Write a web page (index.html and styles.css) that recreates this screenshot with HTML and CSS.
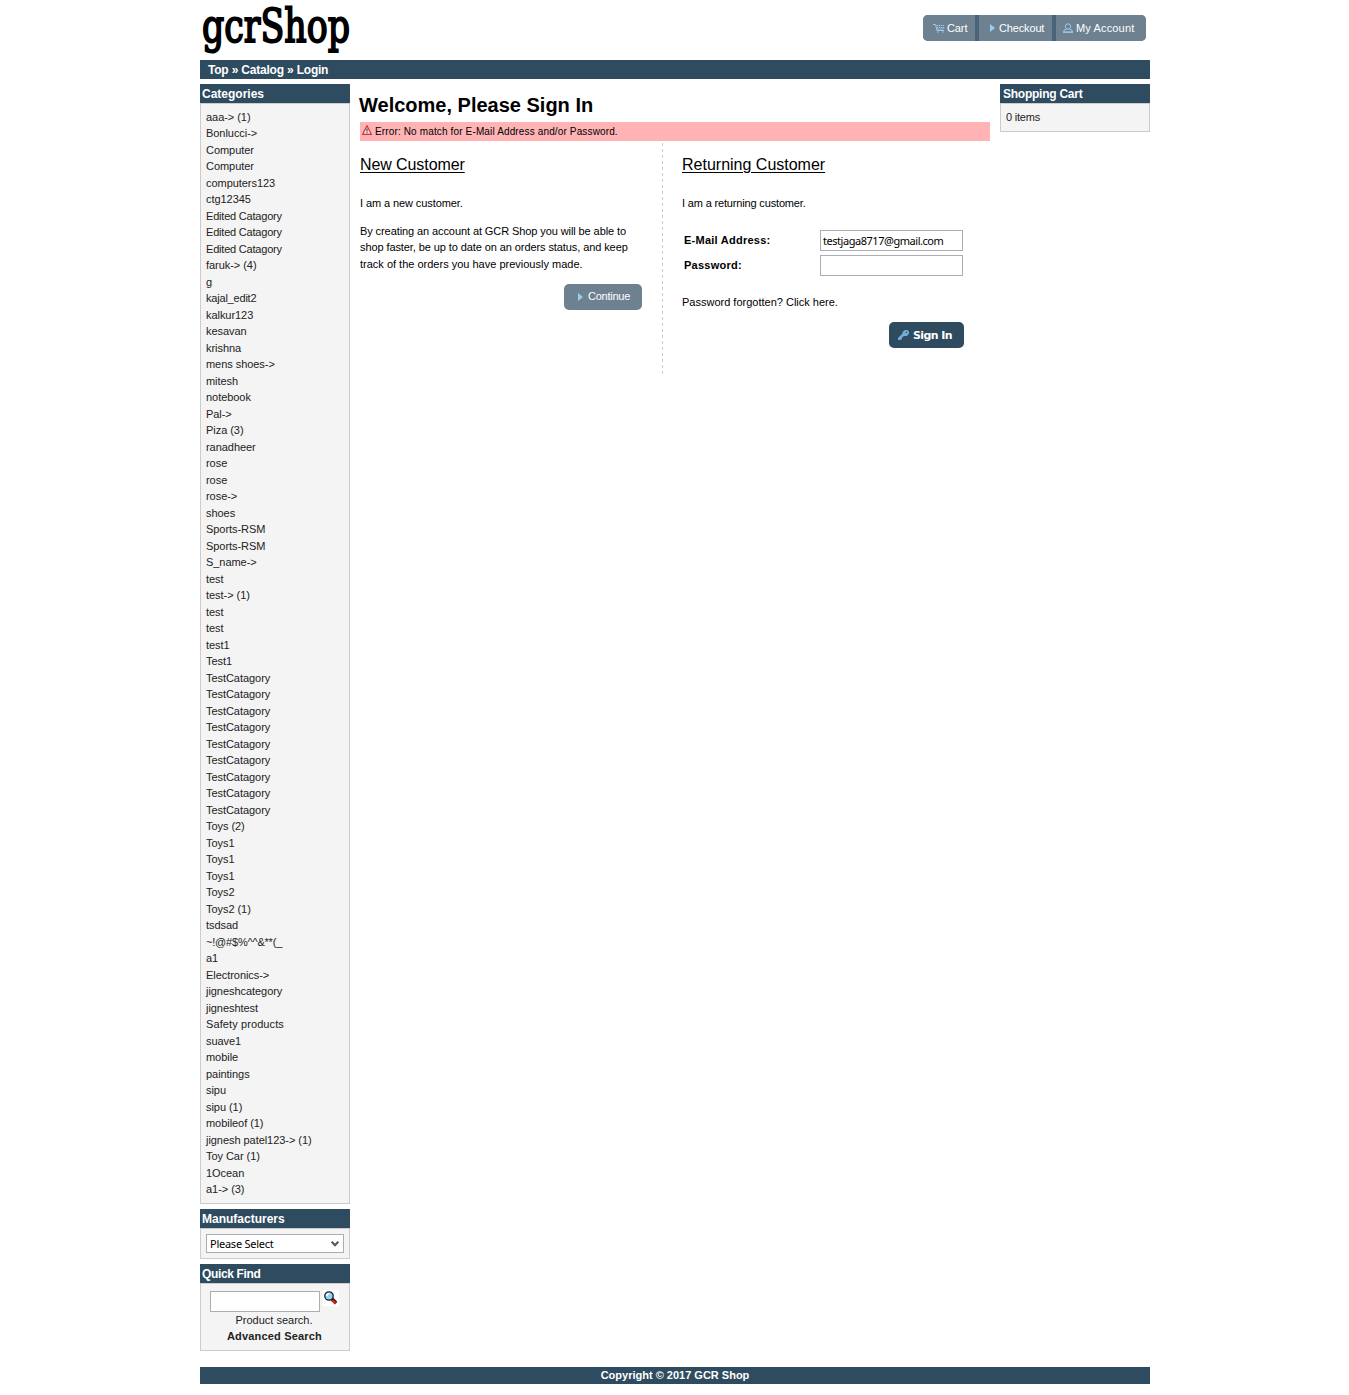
FILE: index.html
```html
<!DOCTYPE html>
<html lang="en">
<head>
<meta charset="utf-8">
<title>GCR Shop</title>
<link rel="stylesheet" href="styles.css">
</head>
<body>
<div class="page">
  <header class="header">
    <svg class="logo" width="156" height="60" viewBox="0 0 156 60" role="img" aria-label="gcrShop"><text x="2" y="42" textLength="148" lengthAdjust="spacingAndGlyphs">gcrShop</text></svg>
    <nav class="buttons">
      <a class="button cart"><svg width="12" height="10" viewBox="0 0 12 10"><path d="M0 1.500h2.500l1.500 6h7"/><path stroke-dasharray="1.300 .7" d="M3.500 2.500h8M4 4.500h7.500M4.500 6h6.500"/><path d="M4 9h1.500M9 9h1.500"/></svg>Cart</a>
      <a class="button checkout"><svg width="5" height="8" viewBox="0 0 5 8"><path class="solid" d="M0 0l5 4-5 4z"/></svg>Checkout</a>
      <a class="button account"><svg width="10" height="10" viewBox="0 0 10 10"><circle cx="5" cy="3.500" r="2.700"/><path d="M3.500 6L.8 7.500v1.500h8.400V7.500L6.500 6M0 9.300h10"/></svg>My Account</a>
    </nav>
  </header>
  <div class="breadcrumb">Top » Catalog » Login</div>
  <div class="columns">
    <aside class="side">
      <section class="box">
        <h2>Categories</h2>
        <ul class="categories">
          <li>aaa-&gt; (1)</li><li>Bonlucci-&gt;</li><li>Computer</li><li>Computer</li><li>computers123</li><li>ctg12345</li>
          <li class="edited">Edited Catagory</li><li class="edited">Edited Catagory</li><li class="edited">Edited Catagory</li><li>faruk-&gt; (4)</li><li>g</li><li class="edited">kajal_edit2</li>
          <li>kalkur123</li><li>kesavan</li><li>krishna</li><li>mens shoes-&gt;</li><li>mitesh</li><li>notebook</li><li>Pal-&gt;</li>
          <li>Piza (3)</li><li>ranadheer</li><li>rose</li><li>rose</li><li>rose-&gt;</li><li>shoes</li><li>Sports-RSM</li><li>Sports-RSM</li>
          <li>S_name-&gt;</li><li>test</li><li>test-&gt; (1)</li><li>test</li><li>test</li><li>test1</li><li>Test1</li>
          <li>TestCatagory</li><li>TestCatagory</li><li>TestCatagory</li><li>TestCatagory</li><li>TestCatagory</li>
          <li>TestCatagory</li><li>TestCatagory</li><li>TestCatagory</li><li>TestCatagory</li>
          <li>Toys (2)</li><li>Toys1</li><li>Toys1</li><li>Toys1</li><li>Toys2</li><li>Toys2 (1)</li><li>tsdsad</li>
          <li class="edited">~!@#$%^^&amp;**(_</li><li>a1</li><li>Electronics-&gt;</li><li>jigneshcategory</li><li>jigneshtest</li>
          <li class="safety">Safety products</li><li>suave1</li><li>mobile</li><li>paintings</li><li>sipu</li><li>sipu (1)</li><li>mobileof (1)</li>
          <li>jignesh patel123-&gt; (1)</li><li>Toy Car (1)</li><li>1Ocean</li><li>a1-&gt; (3)</li>
        </ul>
      </section>
      <section class="box">
        <h2>Manufacturers</h2>
        <div class="manufacturers"><div class="select"><span>Please Select</span><svg width="8" height="7" viewBox="0 0 8 7"><path d="M.7 1.700L4 5.300l3.300-3.600"/></svg></div></div>
      </section>
      <section class="box">
        <h2 class="find-title">Quick Find</h2>
        <div class="find">
          <div class="find-row"><input type="text" aria-label="Search"><svg width="16" height="16" viewBox="0 0 16 16"><path fill="#fff" d="M0 0h16v16H0z"/><path d="M8.500 8.500L13 13" stroke="#111" stroke-width="3.500"/><path d="M9 10l4 3.500" stroke="#e01c10" stroke-width="2.500"/><circle cx="6" cy="6" r="4.200" fill="#8fd8f2" stroke="#14202c" stroke-width="1.300"/><path d="M3.500 6Q4 3.500 6.500 3.500" stroke="#fff" stroke-width="1.500"/></svg></div>
          <div>Product search.</div>
          <div class="advanced">Advanced Search</div>
        </div>
      </section>
    </aside>
    <main class="content">
      <h1>Welcome, Please Sign In</h1>
      <div class="error"><svg width="10" height="10" viewBox="0 0 10 10"><path d="M5 .7L9.300 9.300H.7z" fill="#f4dede" stroke="#d3353f" stroke-width="1.200"/><path d="M5 3.500v3M5 7.300v1" stroke="#555" stroke-width="1.300"/></svg><span>Error: No match for E-Mail Address and/or Password.</span></div>
      <div class="login">
        <section class="customer">
          <h3>New Customer</h3>
          <p>I am a new customer.</p>
          <p class="benefits">By creating an account at GCR Shop you will be able to<br>shop faster, be up to date on an orders status, and keep<br><span class="last">track of the orders you have previously made.</span></p>
          <a class="button continue"><svg width="5" height="8" viewBox="0 0 5 8"><path class="solid" d="M0 0l5 4-5 4z"/></svg><span>Continue</span></a>
        </section>
        <svg class="divider" width="1" height="231"><path d="M.5 0v231"/></svg>
        <section class="customer returning">
          <h3>Returning Customer</h3>
          <p class="intro">I am a returning customer.</p>
          <div class="fields">
            <label for="email">E-Mail Address:</label><input id="email" type="text" value="testjaga8717@gmail.com">
            <label for="password">Password:</label><input id="password" type="password">
          </div>
          <p class="forgot">Password forgotten? Click here.</p>
          <a class="button signin"><svg width="11" height="10" viewBox="0 0 11 10"><path class="solid" d="M5 1.500L7 0h2.500L11 1.500v2L9 6H6L4 7.500V9L2 10H0V8l4-4z"/><circle cx="8.500" cy="2.200" r=".8" fill="#2e4b60"/></svg>Sign In</a>
        </section>
      </div>
    </main>
    <aside class="side">
      <section class="box">
        <h2 class="cart-title">Shopping Cart</h2>
        <div class="cart-body">0 items</div>
      </section>
    </aside>
  </div>
  <footer class="footer">Copyright © 2017 GCR Shop</footer>
</div>
</body>
</html>
```
FILE: styles.css
```css
* { box-sizing: border-box; }
body {
  margin: 0;
  background: #fff;
  color: #000;
  font: 11px/16.5px "Liberation Sans", Arial, sans-serif;
}
h1, h2, h3, p, ul { margin: 0; padding: 0; }
svg { flex: none; fill: none; }
.page { width: 950px; margin-left: 200px; }
.header { display: flex; justify-content: space-between; height: 60px; }
.logo { overflow: visible; }
.logo text { font: 47px "DejaVu Serif", serif; fill: #000; stroke: #000; stroke-width: 2px; }
.buttons { display: flex; margin: 15px 4px 0 0; height: 26px; gap: 4px; background: #49647a; border-radius: 5px; }
.button {
  display: flex;
  align-items: center;
  height: 26px;
  gap: 3px;
  color: #fff;
  background: #6d8191;
  white-space: nowrap;
}
.button svg { stroke: #9ccdef; stroke-width: 1; }
.button .solid { fill: #9ccdef; stroke: none; }
.cart { width: 52px; padding-left: 10px; gap: 2px; letter-spacing: -.1px; border-radius: 5px 0 0 5px; }
.checkout { width: 73px; padding-left: 11px; gap: 4px; letter-spacing: -.15px; }
.account { width: 90px; padding-left: 7px; letter-spacing: .15px; border-radius: 0 5px 5px 0; }
.breadcrumb { height: 19px; padding-left: 8px; background: #2e4b60; color: #fff; font: bold 12px/20px "Liberation Sans", Arial, sans-serif; letter-spacing: -.22px; word-spacing: .1px; }
.columns { display: flex; justify-content: space-between; margin-top: 5px; }
.side { display: flex; flex-direction: column; gap: 5px; width: 150px; }
.box { border: 1px solid #ccc; border-top: 0; background: #f4f4f4; color: #222; }
.box h2 { height: 19px; margin: 0 -1px; padding-left: 2px; background: #2e4b60; color: #fff; font: bold 12px/20px "Liberation Sans", Arial, sans-serif; }
.box h2 + * { border-top: 1px solid #ccc; }
.box .find-title { letter-spacing: -.35px; }
.categories { height: 1100px; padding: 4.9px 5px 0; list-style: none; letter-spacing: -.05px; }
.edited { letter-spacing: -.2px; }
.safety { letter-spacing: .1px; }
.manufacturers { height: 30px; padding: 5px; }
.select { display: flex; align-items: center; justify-content: space-between; height: 19px; padding: 0 4px 0 3px; border: 1px solid #abadb3; background: #fff; color: #000; font: 11px "Noto Sans", sans-serif; letter-spacing: -.25px; }
.select svg { stroke: #555; stroke-width: 2; }
.find { height: 67px; padding: 7px 9px 0; text-align: center; line-height: 16px; }
.find-row { display: flex; gap: 3px; height: 21px; }
.find-row svg { margin-top: -1px; }
.find-row + div { margin: 0 2px 0 0; }
input { height: 21px; width: 143px; padding: 1px 2px; border: 1px solid #abadb3; background: #fff; color: #000; font: 11px "Noto Sans", sans-serif; letter-spacing: -.46px; }
.find-row input { width: 110px; }
.advanced { margin-right: 1px; font-weight: bold; letter-spacing: .18px; }
.content { width: 630px; }
h1 { height: 38px; margin-left: -1px; font: bold 20px/24px "Liberation Sans", Arial, sans-serif; padding-top: 9px; }
.error { display: flex; gap: 3px; height: 19px; padding: 3px 2px; background: #ffb3b5; font-size: 10px; line-height: 14px; letter-spacing: .14px; }
.login { display: flex; padding-top: 2px; }
.customer { width: 302px; padding-right: 20px; letter-spacing: -.09px; }
.divider path { stroke: #ccc; stroke-dasharray: 3 3; }
.returning { padding: 0 0 0 19px; width: 301px; letter-spacing: 0; }
h3 { height: 52px; font: 16px/24px "Liberation Sans", Arial, sans-serif; padding-top: 10px; text-decoration: underline; text-underline-offset: 2px; }
.benefits { margin-top: 11px; }
.last { letter-spacing: 0; }
.intro { letter-spacing: -.16px; }
.continue { width: 78px; margin: 12px 0 0 auto; padding-left: 14px; gap: 5px; border-radius: 5px; letter-spacing: -.25px; }
.continue span { margin-top: -1px; }
.fields { display: grid; grid-template-columns: 136px 143px; gap: 4px 0; margin: 18px 0 0 2px; font-weight: bold; line-height: 21px; letter-spacing: .25px; }
.forgot { margin-top: 18px; }
.signin { width: 75px; margin: 12px 0 0 auto; padding-left: 9px; gap: 4px; border-radius: 5px; background: #2e4b60; font: bold 11px "DejaVu Sans", sans-serif; letter-spacing: -.6px; }
.signin .solid { fill: #6faedb; }
.signin svg { stroke: none; }
.box .cart-title { padding-left: 3px; letter-spacing: -.25px; }
.cart-body { height: 28px; padding: 5px; letter-spacing: -.2px; }
.footer { height: 17px; margin-top: 16px; background: #2e4b60; color: #fff; text-align: center; font-weight: bold; line-height: 17px; }
```
